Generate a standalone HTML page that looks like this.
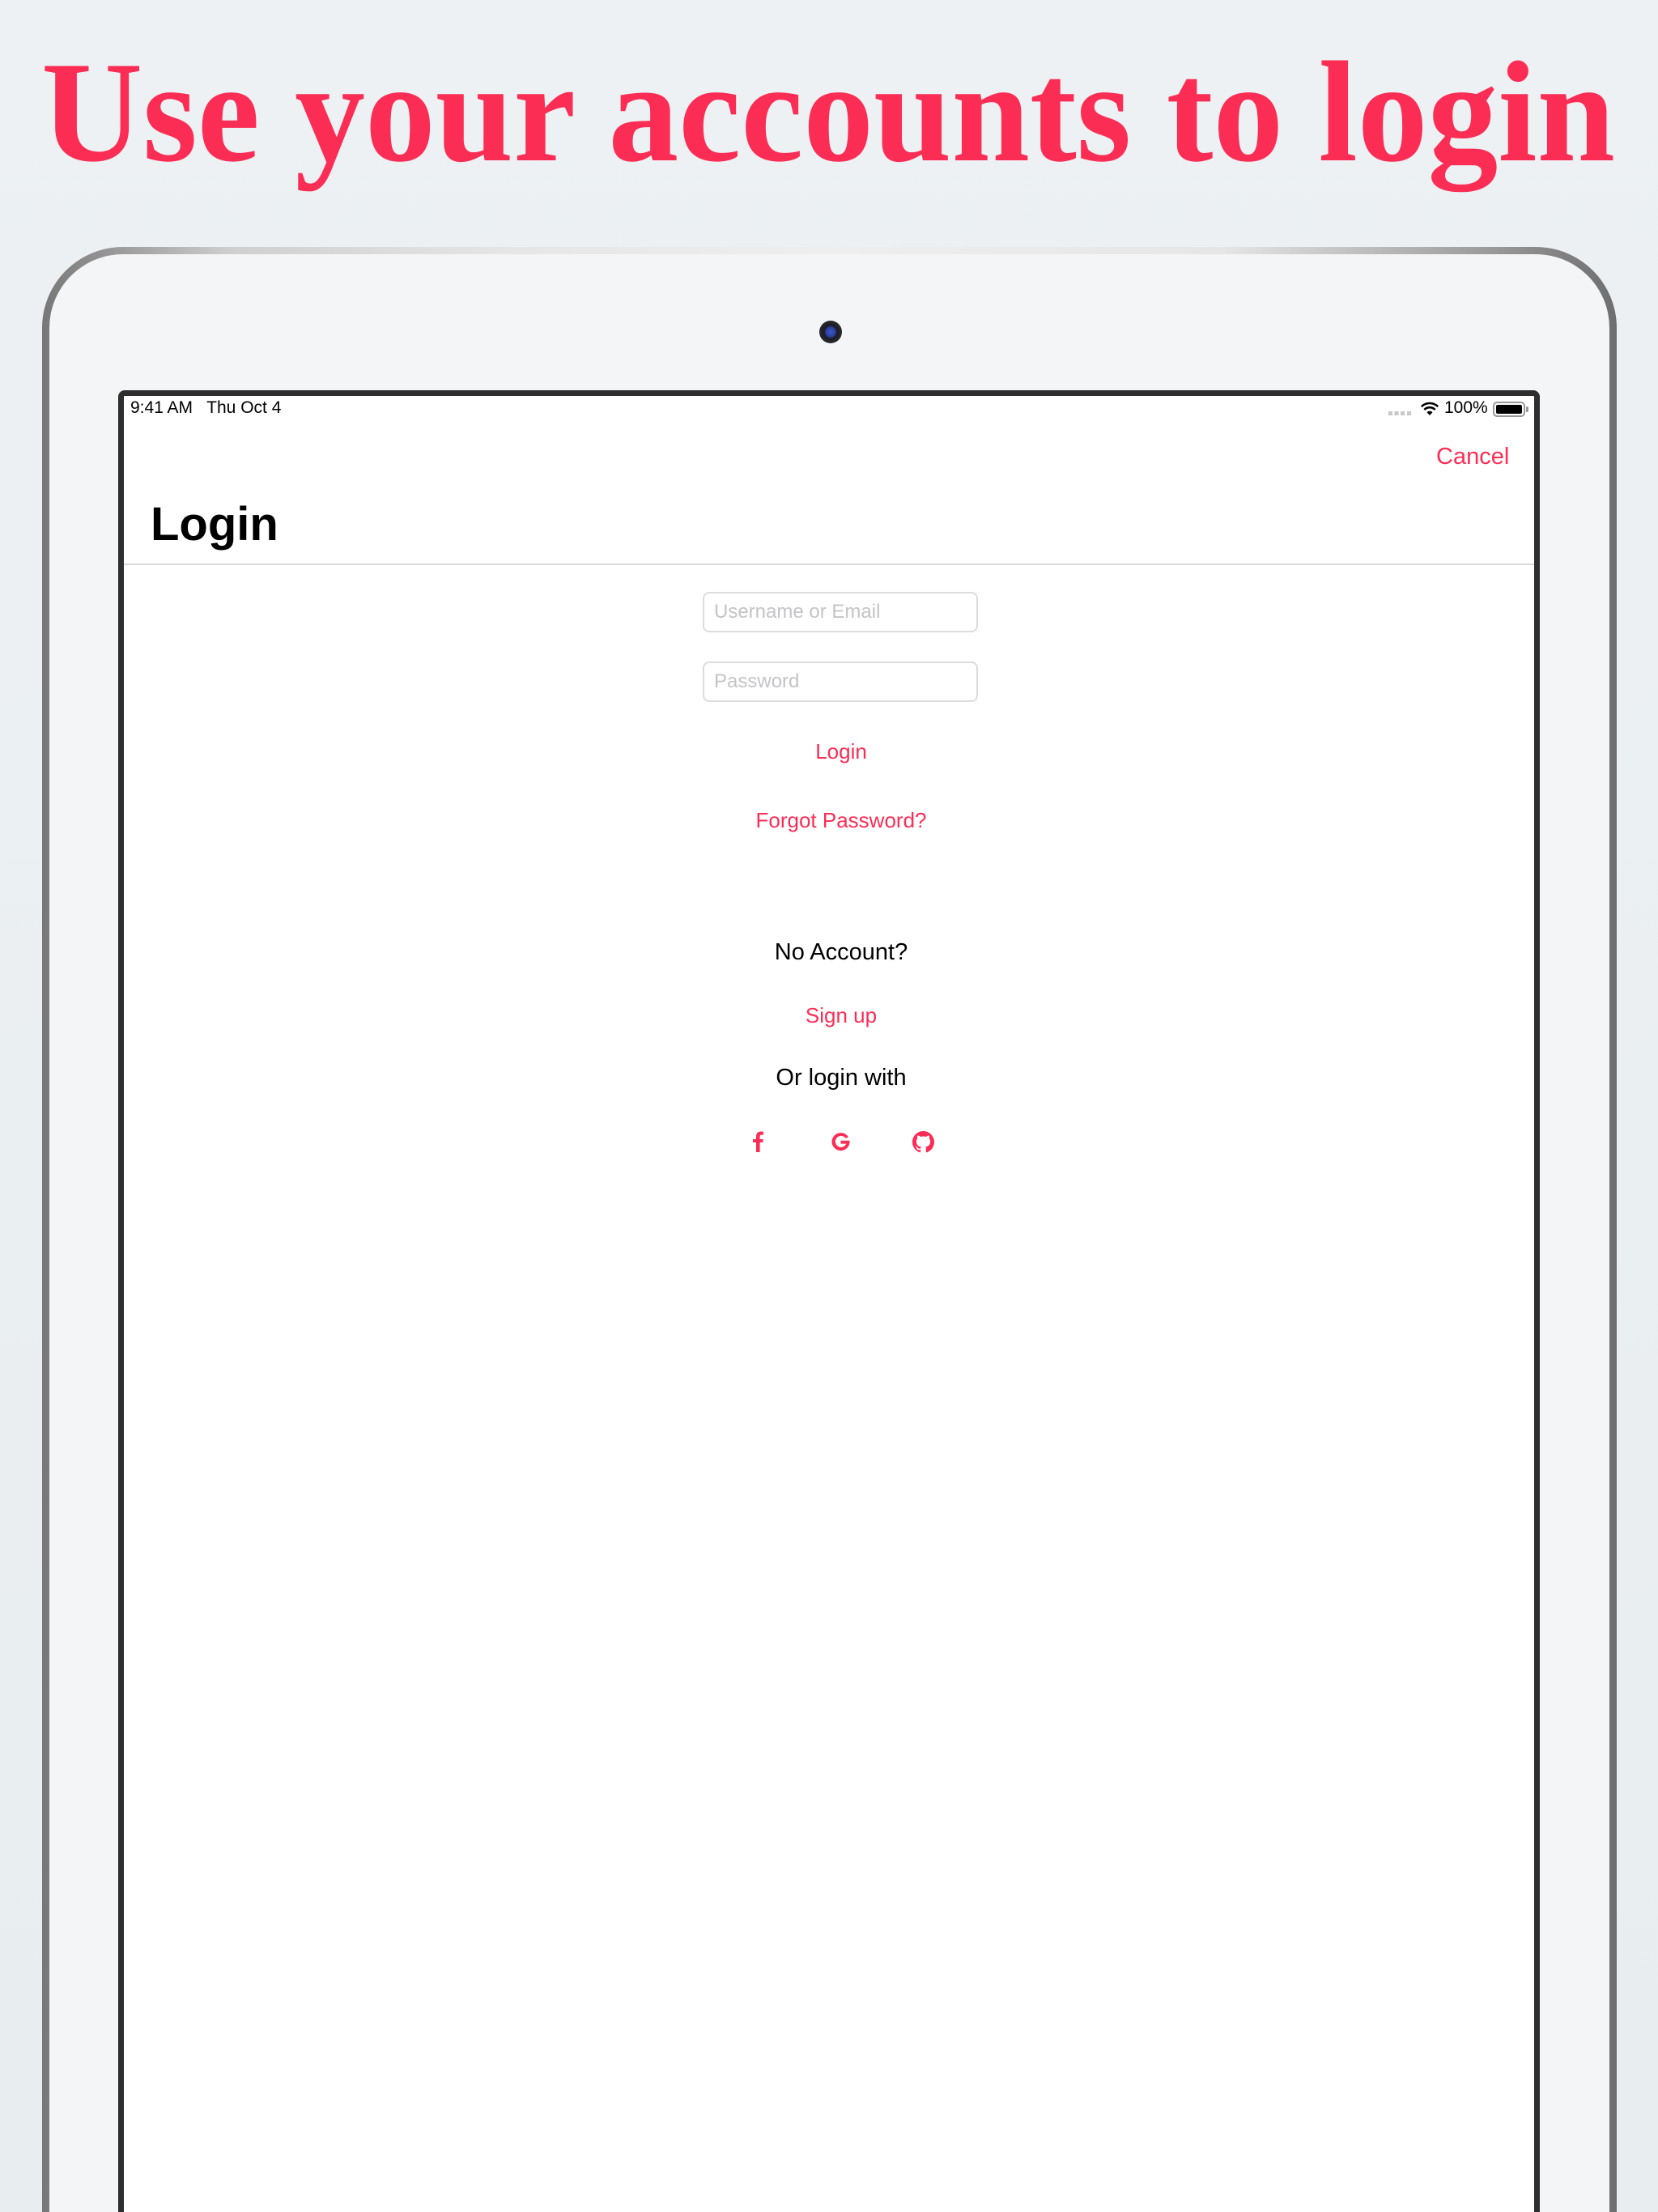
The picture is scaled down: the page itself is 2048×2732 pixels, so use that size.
<!DOCTYPE html>
<html><head><meta charset="utf-8">
<style>
html,body{margin:0;padding:0;width:2048px;height:2732px;overflow:hidden;}
#wrap{width:2048px;height:2732px;position:relative;overflow:hidden;background:linear-gradient(180deg,#edf1f3 0%,#e8edf0 100%);font-family:"Liberation Sans",Arial,sans-serif;}
.abs{position:absolute;}
.frame2{left:52px;top:305px;width:1945px;height:2427px;border-radius:100px 100px 0 0;box-sizing:border-box;border:9px solid transparent;border-bottom-width:0;
 background:linear-gradient(#f3f5f7,#f3f5f7) padding-box,linear-gradient(90deg,#777 0%,#cfcfcf 12%,#e6e6e6 30%,#eeeeee 50%,#e6e6e6 75%,#9a9a9a 92%,#6e6e6e 100%) border-box;}
.screen{left:146px;top:482px;width:1756px;height:2250px;box-sizing:border-box;border:7px solid #2e2e2e;border-bottom-width:0;border-radius:8px 8px 0 0;background:#fff;}
.red{color:#fc2d55;}
.c{text-align:center;width:400px;left:839px;}
.field{left:868px;width:340px;height:50px;box-sizing:border-box;border:2px solid #dcdcdc;border-radius:8px;color:#c4c4c8;font-size:24px;line-height:46px;padding-left:12px;}
</style></head><body><div id="wrap">
<svg class="abs" style="left:0;top:0" width="2048" height="260">
<text x="51" y="198" textLength="1944" lengthAdjust="spacingAndGlyphs" font-family="Liberation Serif,serif" font-weight="bold" font-size="178" fill="#fb2d55">Use your accounts to login</text>
</svg>
<div class="abs frame2"></div>
<div class="abs" style="left:1012px;top:396px;width:28px;height:28px;border-radius:50%;background:radial-gradient(circle,#3b57c9 0,#2a3f9e 6px,#1b1b22 8px,#2b2b2f 14px);"></div>
<div class="abs screen"></div>
<div class="abs" style="left:161px;top:492px;font-size:21px;color:#000;white-space:pre">9:41 AM   Thu Oct 4</div>
<div class="abs" style="left:1715px;top:508px;width:28px;height:5px;background:repeating-linear-gradient(90deg,#c8c8c8 0 5px,transparent 5px 7.6px)"></div>
<svg class="abs" style="left:1754px;top:495px" width="24" height="20" viewBox="0 0 24 20"><path d="M12 18 L8.5 14.2 A5 5 0 0 1 15.5 14.2 Z" fill="#000"/><path d="M5.3 11 A9.5 9.5 0 0 1 18.7 11" stroke="#000" stroke-width="2.6" fill="none"/><path d="M1.8 7.2 A14.5 14.5 0 0 1 22.2 7.2" stroke="#000" stroke-width="2.6" fill="none"/></svg>
<div class="abs" style="left:1784px;top:492px;font-size:21px;color:#000">100%</div>
<div class="abs" style="left:1844px;top:496px;width:40px;height:19px;box-sizing:border-box;border:2px solid #999;border-radius:5px;padding:2px"><div style="width:100%;height:100%;background:#000;border-radius:2px"></div></div>
<div class="abs" style="left:1885px;top:502px;width:3px;height:7px;background:#999;border-radius:0 2px 2px 0"></div>
<div class="abs red" style="left:1774px;top:548px;font-size:29px">Cancel</div>
<div class="abs" style="left:186px;top:614px;font-size:58px;font-weight:bold;color:#000">Login</div>
<div class="abs" style="left:153px;top:696px;width:1742px;height:2px;background:#d9d9d9"></div>
<div class="abs field" style="top:731px">Username or Email</div>
<div class="abs field" style="top:817px">Password</div>
<div class="abs c red" style="top:913px;font-size:26px">Login</div>
<div class="abs c red" style="top:998px;font-size:26px">Forgot Password?</div>
<div class="abs c" style="top:1160px;font-size:29px;color:#000">No Account?</div>
<div class="abs c red" style="top:1239px;font-size:26px">Sign up</div>
<div class="abs c" style="top:1315px;font-size:29px;color:#000">Or login with</div>
<svg class="abs" style="left:925px;top:1396px" width="24" height="28" viewBox="0 0 24 28"><path d="M9 27 V15 H5 V11 H9 V7.5 C9 3.5 11.5 1.5 15 1.5 C16.5 1.5 17.5 1.7 18 1.8 V5.6 H15.8 C14.2 5.6 13.6 6.4 13.6 7.8 V11 H17.8 L17.2 15 H13.6 V27 Z" fill="#fc2d55"/></svg>
<svg class="abs" style="left:1025px;top:1397px" width="27" height="27" viewBox="0 0 27 27"><path d="M23 7.5 A11 11 0 1 0 24.5 14 V11.8 H13.5 V15.6 H20.3 A7 7 0 1 1 19.5 8.8 Z" fill="#fc2d55"/></svg>
<svg class="abs" style="left:1127px;top:1397px" width="27" height="27" viewBox="0 0 16 16"><path fill="#fc2d55" d="M8 0C3.580 0 0 3.58 0 8c0 3.54 2.29 6.53 5.470 7.59.4.07.55-.17.55-.38 0-.19-.01-.82-.01-1.49-2.010.37-2.530-.49-2.690-.94-.09-.23-.48-.94-.82-1.130-.28-.15-.68-.52-.01-.53.63-.01 1.080.58 1.230.82.72 1.21 1.870.87 2.330.66.07-.52.28-.87.51-1.070-1.780-.2-3.640-.89-3.640-3.950 0-.87.31-1.590.82-2.150-.08-.2-.36-1.020.08-2.120 0 0 .67-.21 2.2.82.64-.18 1.320-.27 2-.27.68 0 1.360.09 2 .27 1.530-1.040 2.2-.82 2.2-.82.44 1.1.16 1.920.08 2.120.51.56.82 1.270.82 2.150 0 3.070-1.870 3.750-3.650 3.950.29.25.54.73.54 1.480 0 1.070-.01 1.930-.01 2.2 0 .21.15.46.55.38A8.013 8.013 0 0016 8c0-4.420-3.580-8-8-8z"/></svg>
</div></body></html>
